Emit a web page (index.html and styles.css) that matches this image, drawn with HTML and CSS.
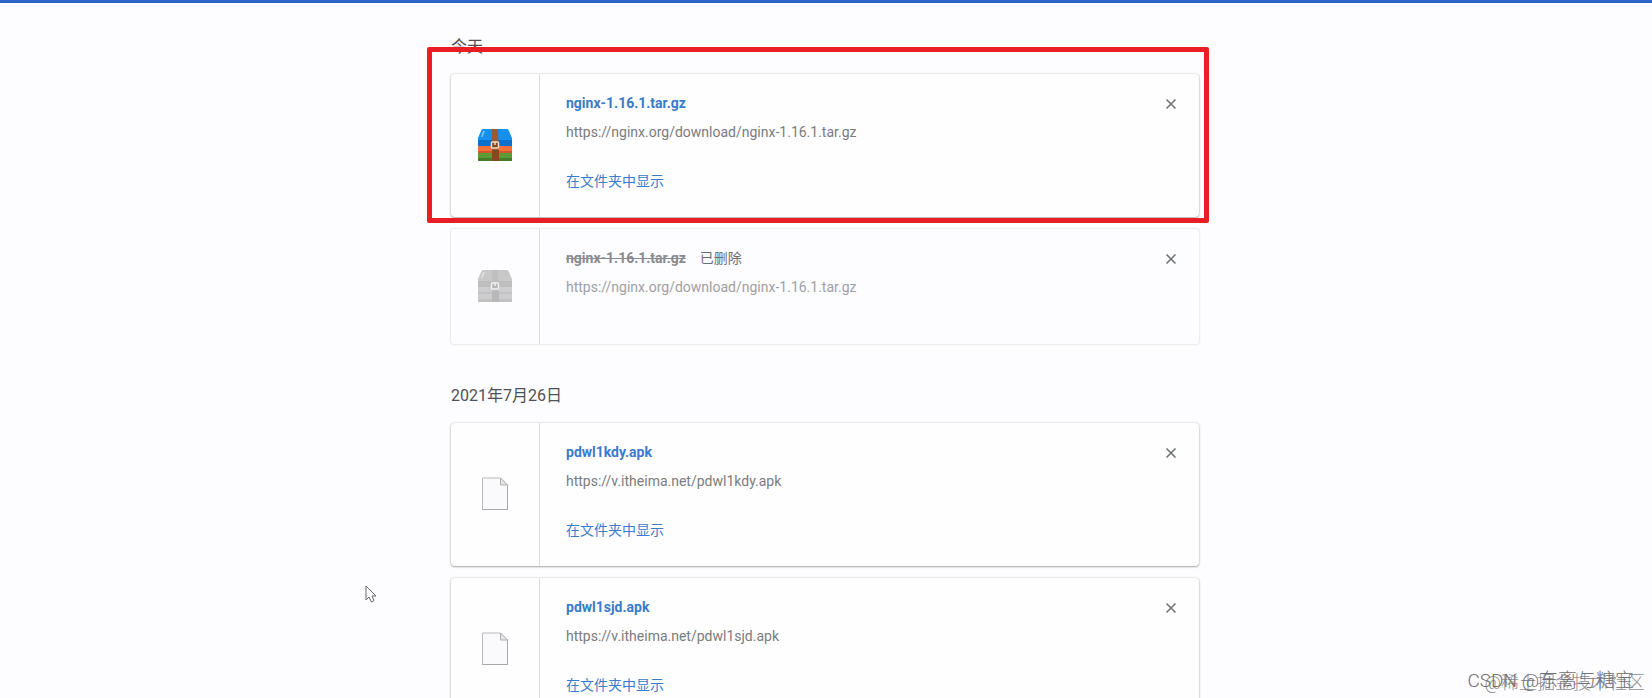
FILE: index.html
```html
<!DOCTYPE html>
<html lang="zh-CN">
<head>
    <meta charset="UTF-8">
    <meta name="viewport" content="width=device-width, initial-scale=1.0">
    <title>下载内容</title>
    <link rel="stylesheet" href="styles.css">
</head>
<body>
    <!-- shared icons -->
    <svg class="icon-defs" width="0" height="0" aria-hidden="true">
        <symbol id="icon-close" viewBox="0 0 12 12">
            <path d="M1.5 1.5l9 9M10.5 1.5l-9 9" fill="none" stroke="#6b6e73" stroke-width="1.5"/>
        </symbol>
        <symbol id="icon-file" viewBox="0 0 26 34">
            <path d="M.5 1h18l7 7v24.500h-25z" fill="#fafafc" stroke="#b9b9bb"/>
            <path d="M25.500 8v24.500h-25" fill="none" stroke="#a8a8aa"/>
            <path d="M18.500 1v7h7z" fill="#e6e6e8" stroke="#b0b0b2"/>
        </symbol>
        <symbol id="icon-archive" viewBox="0 0 34 34">
            <path d="M5 1h24q1 0 1.500 1l3.500 8v8H0v-8l3.500-8Q4 1 5 1z" fill="#1590ec"/>
            <path d="M0 12h34v6H0z" fill="#0f70cc"/>
            <path d="M5 3h2L4.500 9H3z" fill="#79c5f7"/>
            <path d="M0 18h34v7H0z" fill="#f4713a"/>
            <path d="M0 23h34v2H0z" fill="#d4562c"/>
            <path d="M0 25h34v7q0 1-1 1H1q-1 0-1-1z" fill="#5b9c35"/>
            <path d="M0 30h34v2q0 1-1 1H1q-1 0-1-1z" fill="#437d2b"/>
            <path d="M14 1h6l1 32h-7z" fill="#9a5a34"/>
            <path d="M14 22h7v11h-7z" fill="#84491f"/>
            <rect x="13.500" y="14" width="7" height="6" rx="1" fill="#85451f" stroke="#f3ddce" stroke-width="1.500"/>
            <path d="M17 14v3" stroke="#f3ddce" stroke-width="1.500"/>
        </symbol>
    </svg>

    <main class="downloads">
        <h3 class="date">今天</h3>
        <div class="item marked">
            <div class="icon"><svg class="archive" aria-hidden="true"><use href="#icon-archive"/></svg></div>
            <div class="details">
                <div class="title"><a class="name" href="#">nginx-1.16.1.tar.gz</a></div>
                <a class="url" href="#">https://nginx.org/download/nginx-1.16.1.tar.gz</a>
                <a class="show" href="#">在文件夹中显示</a>
            </div>
            <button class="remove" aria-label="从列表中移除"><svg aria-hidden="true"><use href="#icon-close"/></svg></button>
        </div>
        <div class="item deleted">
            <div class="icon"><svg class="archive" aria-hidden="true"><use href="#icon-archive"/></svg></div>
            <div class="details">
                <div class="title"><s class="name">nginx-1.16.1.tar.gz</s><span class="tag">已删除</span></div>
                <a class="url" href="#">https://nginx.org/download/nginx-1.16.1.tar.gz</a>
            </div>
            <button class="remove" aria-label="从列表中移除"><svg aria-hidden="true"><use href="#icon-close"/></svg></button>
        </div>

        <h3 class="date">2021年7月26日</h3>
        <div class="item">
            <div class="icon"><svg class="file" aria-hidden="true"><use href="#icon-file"/></svg></div>
            <div class="details">
                <div class="title"><a class="name" href="#">pdwl1kdy.apk</a></div>
                <a class="url" href="#">https://v.itheima.net/pdwl1kdy.apk</a>
                <a class="show" href="#">在文件夹中显示</a>
            </div>
            <button class="remove" aria-label="从列表中移除"><svg aria-hidden="true"><use href="#icon-close"/></svg></button>
        </div>
        <div class="item">
            <div class="icon"><svg class="file" aria-hidden="true"><use href="#icon-file"/></svg></div>
            <div class="details">
                <div class="title"><a class="name" href="#">pdwl1sjd.apk</a></div>
                <a class="url" href="#">https://v.itheima.net/pdwl1sjd.apk</a>
                <a class="show" href="#">在文件夹中显示</a>
            </div>
            <button class="remove" aria-label="从列表中移除"><svg aria-hidden="true"><use href="#icon-close"/></svg></button>
        </div>
    </main>

    <svg class="cursor" viewBox="0 0 12 18" aria-hidden="true">
        <path d="M1 1v14l3-3 2.500 5 2.500-1.500L7 11h4z" fill="#fff" stroke="#66666c"/>
    </svg>
    <div class="watermark site">@稀土掘金技术社区</div>
    <div class="watermark author">CSDN @东离与糖宝</div>
</body>
</html>
```

FILE: styles.css
```css
* {
    box-sizing: border-box;
}
body {
    margin: 0;
    height: 100vh;
    padding-right: 2px;
    position: relative;
    overflow: hidden;
    border-top: 3px solid #2a66c8;
    background-color: #fdfcfe;
    font-family: Roboto, "Noto Sans CJK SC", sans-serif;
    font-size: 14px;
    line-height: 20px;
    color: #6b6e73;
}
a {
    color: #3a7bcb;
    text-decoration: none;
}
.icon-defs {
    position: absolute;
}
.downloads {
    max-width: 748px;
    margin: 0 auto;
    padding-top: 32px;
}
.date {
    margin: 0 0 15px;
    font-size: 16px;
    font-weight: 400;
    line-height: 24px;
    color: #505056;
}
.item {
    display: flex;
    position: relative;
    min-height: 143px;
    margin-bottom: 12px;
    background-color: #fefefe;
    border-radius: 4px;
    box-shadow: 0 1px 2px rgba(60, 64, 67, .4), 0 0 2px rgba(60, 64, 67, .25);
}
.icon {
    display: flex;
    align-items: center;
    justify-content: center;
    width: 89px;
    padding-bottom: 2px;
    border-right: 1px solid #dddde0;
}
.archive {
    width: 34px;
    height: 34px;
}
.file {
    width: 26px;
    height: 34px;
}
.details {
    flex: 1;
    display: flex;
    flex-direction: column;
    align-items: flex-start;
    padding: 19px 26px;
}
.title {
    display: flex;
    gap: 14px;
    margin-bottom: 9px;
}
.name {
    font-weight: 700;
}
.url {
    color: #7b7b7f;
}
.show {
    margin-top: 29px;
}
.remove {
    display: flex;
    align-items: center;
    justify-content: center;
    width: 24px;
    height: 24px;
    margin: 18px 16px 0 0;
    padding: 0;
    border: none;
    background: none;
    cursor: pointer;
}
.remove svg {
    width: 12px;
    height: 12px;
}
.deleted {
    min-height: 115px;
    margin-bottom: 40px;
    background: none;
    border-radius: 2px;
    box-shadow: 0 0 2px rgba(60, 64, 67, .3);
}
.deleted .archive {
    filter: grayscale(1);
    opacity: .4;
}
.deleted .name {
    color: #8b8b8f;
}
.deleted .url {
    color: #a0a0a4;
}
/* red frame round the first download */
.marked::after {
    content: "";
    position: absolute;
    top: -27px;
    right: -10px;
    bottom: -6px;
    left: -24px;
    border: 5px solid #e91e25;
    border-radius: 2px;
    pointer-events: none;
}
.cursor {
    position: absolute;
    top: 582px;
    left: 365px;
    width: 12px;
    height: 18px;
}
.watermark {
    position: absolute;
    white-space: nowrap;
    font-weight: 300;
}
.site {
    right: 7px;
    bottom: 5px;
    font-size: 18px;
    color: #909093;
}
.author {
    right: 18px;
    bottom: 7px;
    font-size: 19px;
    color: #707074;
}
```
